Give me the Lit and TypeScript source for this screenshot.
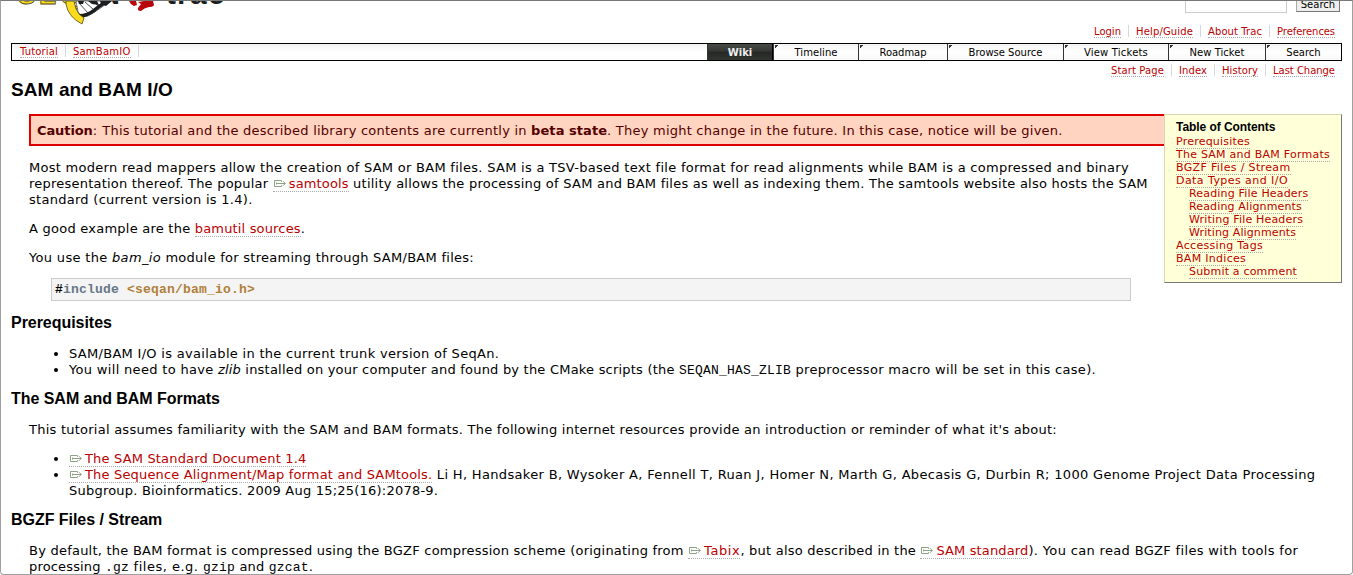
import { LitElement, html, css, svg, nothing } from "lit";
import { customElement } from "lit/decorators.js";

type Run = { t: string; ls?: number; k?: "b" | "i" | "tt" | "link" | "ext" };
type Line = Run[];
type Item = { t: string; ls?: number; sub?: boolean };

const metanav: Item[] = [{ t: "Login" }, { t: "Help/Guide", ls: 0.15 }, { t: "About Trac", ls: 0.09 }, { t: "Preferences", ls: -0.08 }];
const ctxnav: Item[] = [{ t: "Start Page", ls: 0.12 }, { t: "Index", ls: 0.09 }, { t: "History", ls: 0.06 }, { t: "Last Change", ls: -0.03 }];
const crumbs: Item[] = [{ t: "Tutorial", ls: 0.14 }, { t: "SamBamIO", ls: 0.25 }];
const tabs: Item[] = [
  { t: "Wiki" }, { t: "Timeline", ls: 0.06 }, { t: "Roadmap", ls: -0.04 }, { t: "Browse Source" },
  { t: "View Tickets", ls: 0.19 }, { t: "New Ticket", ls: 0.04 }, { t: "Search" },
];
const toc: Item[] = [
  { t: "Prerequisites", ls: 0.22 }, { t: "The SAM and BAM Formats", ls: 0.24 }, { t: "BGZF Files / Stream", ls: 0.35 },
  { t: "Data Types and I/O", ls: 0.44 }, { t: "Reading File Headers", ls: 0.18, sub: true }, { t: "Reading Alignments", ls: 0.15, sub: true },
  { t: "Writing File Headers", ls: 0.18, sub: true }, { t: "Writing Alignments", ls: 0.12, sub: true },
  { t: "Accessing Tags", ls: 0.32 }, { t: "BAM Indices", ls: 0.29 }, { t: "Submit a comment", ls: 0.19, sub: true },
];

const caution: Line = [
  { t: "Caution", k: "b", ls: -0.1 }, { t: ": ", ls: 0.5 },
  { t: "This tutorial and the described library contents are currently in ", ls: 0.23 },
  { t: "beta state", k: "b", ls: 0.06 },
  { t: ". They might change in the future. In this case, notice will be given.", ls: 0.23 },
];
const intro: Line[] = [
  [{ t: "Most modern read mappers allow the creation of SAM or BAM files. SAM is a TSV-based text file format for read alignments while BAM is a compressed and binary", ls: 0.284 }],
  [{ t: "representation thereof. The popular ", ls: 0.22 }, { t: "samtools", k: "ext", ls: 0.15 },
   { t: " utility allows the processing of SAM and BAM files as well as indexing them. The samtools website also hosts the SAM", ls: 0.245 }],
  [{ t: "standard (current version is 1.4).", ls: 0.28 }],
];
const example: Line[] = [[{ t: "A good example are the ", ls: 0.24 }, { t: "bamutil sources", k: "link", ls: 0.16 }, { t: "." }]];
const usage: Line[] = [[{ t: "You use the ", ls: 0.32 }, { t: "bam_io", k: "i", ls: 0.34 }, { t: " module for streaming through SAM/BAM files:", ls: 0.27 }]];
const prereq: Line[][] = [
  [[{ t: "SAM/BAM I/O is available in the current trunk version of SeqAn.", ls: 0.3 }]],
  [[{ t: "You will need to have ", ls: 0.32 }, { t: "zlib", k: "i", ls: 0.17 },
    { t: " installed on your computer and found by the CMake scripts (the ", ls: 0.21 },
    { t: "SEQAN_HAS_ZLIB", k: "tt" }, { t: " preprocessor macro will be set in this case).", ls: 0.31 }]],
];
const formats: Line[] = [[{ t: "This tutorial assumes familiarity with the SAM and BAM formats. The following internet resources provide an introduction or reminder of what it's about:", ls: 0.243 }]];
const resources: Line[][] = [
  [[{ t: "The SAM Standard Document 1.4", k: "ext", ls: 0.17 }]],
  [[{ t: "The Sequence Alignment/Map format and SAMtools.", k: "ext", ls: 0.17 },
    { t: " Li H, Handsaker B, Wysoker A, Fennell T, Ruan J, Homer N, Marth G, Abecasis G, Durbin R; 1000 Genome Project Data Processing", ls: 0.332 }],
   [{ t: "Subgroup. Bioinformatics. 2009 Aug 15;25(16):2078-9.", ls: 0.22 }]],
];
const bgzf: Line[] = [
  [{ t: "By default, the BAM format is compressed using the BGZF compression scheme (originating from ", ls: 0.23 },
   { t: "Tabix", k: "ext", ls: 0.6 }, { t: ", but also described in the ", ls: 0.23 },
   { t: "SAM standard", k: "ext", ls: 0.13 }, { t: "). You can read BGZF files with tools for", ls: 0.34 }],
  [{ t: "processing ", ls: 0.16 }, { t: ".gz", k: "tt" }, { t: " files, e.g. ", ls: 0.5 }, { t: "gzip", k: "tt" }, { t: " and ", ls: 0.2 }, { t: "gzcat", k: "tt" }, { t: "." }],
];

const extIcon = svg`<svg class="ext" width="16" height="8" viewBox="0 0 16 8" fill="none" stroke="#8da286">
  <path d="M8.5 1.8V.5H1.5V6.5H8.5V5.2M4 3.5H12.3M10 1.2L12.3 3.5L10 5.8M3.5 2.5V4.5"/></svg>`;

@customElement("app-root")
export class AppRoot extends LitElement {
  static styles = css`
    :host { display: block; }
    * { box-sizing: border-box; }
    .page { width: 1353px; height: 575px; overflow: hidden; padding: 0 10px; background: #fff; color: #000;
      border: 1px solid #a0a0a0; border-top-color: #777; border-radius: 0 0 4px 4px;
      font: 13px/16px "DejaVu Sans", sans-serif; }
    a { color: #b00; border-bottom: 1px dotted #aaa; text-decoration: none; }
    .header { display: flex; justify-content: space-between; height: 24px; overflow: hidden; }
    .search { display: flex; gap: 9px; padding-right: 2px; }
    .field { width: 102px; height: 22px; margin-top: -10px; border: 1px solid #ccc; }
    .button { width: 44px; height: 22px; margin-top: -11px; background: #eee; border: 1px solid #aaa; border-right-color: #777; border-bottom-color: #777;
      font-size: 10px; line-height: 28px; text-align: center; letter-spacing: .02px; overflow: hidden; }
    .links { display: flex; justify-content: flex-end; height: 12px; padding-right: 7px; font-size: 10px; line-height: 14px; white-space: nowrap; }
    .links span { padding-left: 7px; margin-left: 7px; border-left: 1px solid #d7d7d7; }
    .links span:first-child { border-left: 0; }
    .nav { display: flex; justify-content: space-between; height: 18px; margin: 6px 0 3px; border: 1px solid #000;
      font-size: 10px; line-height: 14px; background: linear-gradient(#f2f2f2, #fff 50%, #fff); }
    .crumbs { display: flex; height: 12px; padding-left: 1px; margin-top: 1px; white-space: nowrap; }
    .crumbs span { padding: 0 7px; border-right: 1px solid #d7d7d7; }
    .tabs { display: grid; grid-template-columns: 66px 85px 89px 116px 105px 97px 76px; line-height: 17px; text-align: center; }
    .tab { border-left: 1px solid #333; overflow: hidden; display: grid; grid-template-columns: 5px 1fr 5px; background: linear-gradient(#f3f3f3, #fff 50%, #f8f8f8); }
    .tab::before { content: ""; width: 4px; height: 4px; margin: 1px 0 0 1px; background: linear-gradient(135deg, #333 50%, transparent 50%); }
    .tab:first-child { color: #eee; font-weight: bold; border-right: 1px solid #000; background: linear-gradient(#484a48, #353735 45%, #252725 50%, #333533); }
    .tab:first-child::before { visibility: hidden; }
    h1, h2 { font-family: "Liberation Sans", Arial, sans-serif; margin: 0; white-space: nowrap; }
    h1 { font-size: 19px; line-height: 22px; letter-spacing: .1px; padding: 3px 0 13px; }
    h2 { font-size: 16px; line-height: 18px; letter-spacing: -.04px; }
    .toc { float: right; width: 178px; height: 169px; padding: 5px 0 0 11px; background: #ffffd8; border: 1px solid #d7d7b8;
      border-right-color: #777; border-bottom-color: #777; font-size: 11px; line-height: 13px; white-space: nowrap; }
    .toc h4 { margin: 0 0 1px; font: bold 12px/14px "Liberation Sans", Arial, sans-serif; letter-spacing: -.06px; }
    .sub { padding-left: 13px; }
    .caution { margin-left: 18px; height: 32px; padding: 7px 6px 5px; border: 2px solid #d00; background: #ffd4c0; color: #500; white-space: pre; }
    .line { display: block; height: 16px; white-space: pre; }
    p { margin: 13px 0 13px 18px; }
    .first { margin-top: 14px; }
    .code { width: 1080px; height: 23px; margin: 12px 0 12px 40px; padding-left: 3px; background: #f4f4f4; border: 1px solid #ccc;
      font: bold 13px/22px "Liberation Mono", "Courier New", monospace; letter-spacing: .2px; white-space: pre; }
    .usage { margin-bottom: 12px; }
    .code + h2 { margin-top: 13px; }
    .kw { color: #678; }
    .inc { color: #b0803a; }
    tt { font-family: "Liberation Mono", "Courier New", monospace; font-size: 13px; letter-spacing: .2px; line-height: 1; }
    ul { margin: 14px 0 12px; padding-left: 58px; }
    .res { margin-top: 13px; }
    .gap { margin-top: 14px; margin-bottom: 0; }
    .ext { vertical-align: 0; }
  `;

  run(r: Run) {
    const s = `letter-spacing:${r.ls ?? 0}px`;
    switch (r.k) {
      case "b": return html`<b style=${s}>${r.t}</b>`;
      case "i": return html`<i style=${s}>${r.t}</i>`;
      case "tt": return html`<tt>${r.t}</tt>`;
      case "link": return html`<a style=${s}>${r.t}</a>`;
      case "ext": return html`<a style=${s}>${extIcon}${r.t}</a>`;
      default: return html`<span style=${s}>${r.t}</span>`;
    }
  }
  lines(ls: Line[]) { return ls.map(l => html`<span class="line">${l.map(r => this.run(r))}</span>`); }
  list(items: Line[][], cls: string) { return html`<ul class=${cls}>${items.map(i => html`<li>${this.lines(i)}</li>`)}</ul>`; }
  links(items: Item[]) { return items.map(i => html`<span><a style="letter-spacing:${i.ls ?? 0}px">${i.t}</a></span>`); }

  logo() {
    return svg`<svg width="230" height="24" viewBox="11 1 230 24">
      <g font-family="Liberation Sans, sans-serif" font-weight="bold" font-size="26">
        <text x="18 39 60" y="4" fill="#fbdc1c" stroke="#4a4520" stroke-width=".8">SEQ</text>
        <text x="82 101" y="4" fill="#1b1f1f">AN</text>
        <text x="166 177 190 208" y="4" font-size="30" fill="#1b1f1f">trac</text>
      </g>
      <path d="M76 1L110 1Q100 9 93 13Q88 17 83 17L78 12Z" fill="#fff" stroke="#222" stroke-width=".6"/>
      <path d="M79 3L88 13M85 2L94 10M93 1L99 7" stroke="#222" stroke-width=".8"/>
      <path d="M78 1H84L83 4H79ZM88 1H97L99 5L92 4ZM100 1H112L106 6L101 4Z" fill="#1b1f1f"/>
      <path d="M111 1Q99 8 95 12Q88 17 80 18L79 14Q87 14 93 9Q99 4 104 1Z" fill="#1b1f1f"/>
      <path d="M66 1H74Q75 9 79 14L84 18L82 24Q68 17 66 4Z" fill="#fbdc1c" stroke="#4a4520" stroke-width=".8"/>
      <path d="M129 1H136L137 5L134 6Q130 4 129 1ZM144 1H153L154 5Q153 7 149 7Q144 8 141 11Q137 11 138 8L141 4L138 2Z" fill="#b9060c"/>
    </svg>`;
  }

  render() {
    return html`<div class="page">
      <div class="header">${this.logo()}<div class="search"><div class="field"></div><div class="button">Search</div></div></div>
      <div class="links">${this.links(metanav)}</div>
      <div class="nav">
        <div class="crumbs">${this.links(crumbs)}</div>
        <div class="tabs">${tabs.map(t => html`<div class="tab"><span style="letter-spacing:${t.ls ?? 0}px">${t.t}</span></div>`)}</div>
      </div>
      <div class="links">${this.links(ctxnav)}</div>
      <h1>SAM and BAM I/O</h1>
      <div class="toc"><h4>Table of Contents</h4>
        ${toc.map(t => html`<div class=${t.sub ? "sub" : nothing}><a style="letter-spacing:${t.ls ?? 0}px">${t.t}</a></div>`)}
      </div>
      <div class="caution">${caution.map(r => this.run(r))}</div>
      <p class="first">${this.lines(intro)}</p>
      <p>${this.lines(example)}</p>
      <p class="usage">${this.lines(usage)}</p>
      <div class="code">#<span class="kw">include</span> <span class="inc">&lt;seqan/bam_io.h&gt;</span></div>
      <h2>Prerequisites</h2>
      ${this.list(prereq, "")}
      <h2>The SAM and BAM Formats</h2>
      <p class="gap">${this.lines(formats)}</p>
      ${this.list(resources, "res")}
      <h2>BGZF Files / Stream</h2>
      <p class="gap">${this.lines(bgzf)}</p>
    </div>`;
  }
}
